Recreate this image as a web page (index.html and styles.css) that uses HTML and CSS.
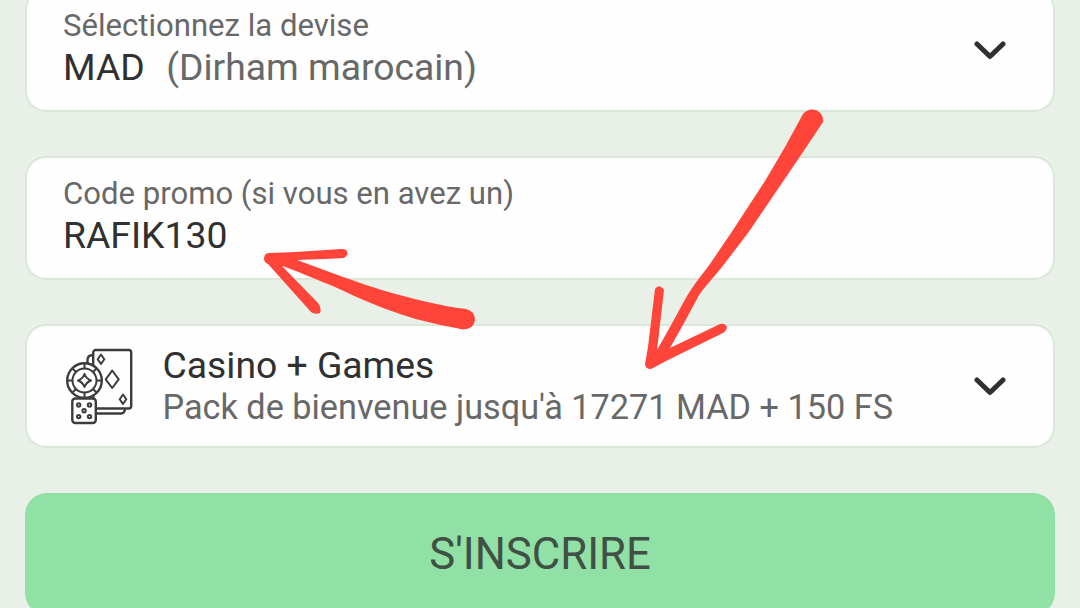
FILE: index.html
```
<!DOCTYPE html>
<html lang="fr">
<head>
  <meta charset="UTF-8">
  <meta name="viewport" content="width=device-width, initial-scale=1.0">
  <title>Inscription</title>
  <link rel="stylesheet" href="styles.css">
</head>
<body>
  <main class="signup">
    <div class="field">
      <div class="field-text">
        <span class="label">Sélectionnez la devise</span>
        <span class="value"><span class="code">MAD</span><span class="muted">(Dirham marocain)</span></span>
      </div>
      <svg class="chevron" viewBox="0 0 32 20"><path d="M3 4 L16 16.500 L29 4"/></svg>
    </div>

    <div class="field">
      <div class="field-text">
        <span class="label">Code promo (si vous en avez un)</span>
        <span class="value">RAFIK130</span>
      </div>
    </div>

    <div class="field field-bonus">
      <svg class="bonus-icon" viewBox="0 0 70 78">
        <!-- cards -->
        <path d="M22.500 18 V12 Q22.500 7 28 7 M30 65.500 H56 Q60 65.500 60 60"/>
        <rect x="28.200" y="2" width="38" height="58.500" rx="2.500"/>
        <path class="thin" d="M36 6.500 L39.300 11.200 L36 16 L32.700 11.200 Z M47.200 22.500 L53.700 31.300 L47.200 40 L40.700 31.300 Z M58 46.500 L61.300 51.200 L58 56 L54.700 51.200 Z"/>
        <!-- chip -->
        <circle cx="19.500" cy="32.500" r="17.300"/>
        <circle class="thin" cx="19.500" cy="32.500" r="12"/>
        <path class="thin" d="M19.500 15 V20.500 M19.500 44.500 V50 M2 32.500 H7.500 M31.500 32.500 H37 M7.300 20.300 L11 24 M28 41 L31.700 44.700 M31.700 20.300 L28 24 M7.300 44.700 L11 41"/>
        <path class="thin" d="M19.500 26 Q21.500 31 26 32.500 Q21.500 34 19.500 39 Q17.500 34 13 32.500 Q17.500 31 19.500 26 Z"/>
        <!-- dice -->
        <rect x="7.300" y="50.500" width="23.500" height="24.500" rx="3"/>
        <g class="thin">
          <circle cx="13.700" cy="57" r="1.700"/>
          <circle cx="24.500" cy="57" r="1.700"/>
          <circle cx="19.100" cy="62.700" r="1.700"/>
          <circle cx="13.700" cy="68.600" r="1.700"/>
          <circle cx="24.500" cy="68.600" r="1.700"/>
        </g>
      </svg>
      <div class="field-text">
        <span class="value">Casino + Games</span>
        <span class="offer">Pack de bienvenue jusqu'à 17271 MAD + 150 FS</span>
      </div>
      <svg class="chevron" viewBox="0 0 32 20"><path d="M3 4 L16 16.500 L29 4"/></svg>
    </div>

    <button class="submit" type="button">S'INSCRIRE</button>
  </main>

  <svg class="arrows" viewBox="0 0 1080 608">
    <path d="M265 255 C263 259 264 262 268 264 L311 312 Q315 315 320 313 Q322 308 318 303 L282 266 C297 271 320 281 335 287 C360 299 382 308 400 314 C420 321 445 326 463 329.500 Q474 329 475 320 Q475 311 466 309 C440 306 410 298 385 291 C358 283 330 272 297 260 L325 259 L344 258 Q348 256 347.500 252 Q346 248.500 341 249 L326 250 L295 252 L270 253 Q266 253 265 255 Z"/>
    <path d="M803 114 Q808 108 816 110 Q824 114 823 122 L803 152 L782 183 L748 233 L722 267 C708 284 700 292 697 299 L684 323 L670 348 L720 324 Q726 323 727 328 Q726 331 723 333 L668 360 L651 369 Q645 369 645 364 L648 347 L655 289 Q659 283 664 290 L657 350 L670 327 L682 305 C692 286 699 279 710 264 L733 230 L765 181 L785 147 Z"/>
  </svg>
</body>
</html>
```
FILE: styles.css
```
* {
  box-sizing: border-box;
}

body {
  margin: 0;
  height: 608px;
  overflow: hidden;
  background-color: #e8f0e8;
  font-family: Roboto, sans-serif;
  color: #303030;
}

.signup {
  display: flex;
  flex-direction: column;
  gap: 44px;
  margin-top: -12px;
  padding: 0 25px;
}

.field {
  display: flex;
  align-items: center;
  height: 124px;
  padding: 0 47px 0 36px;
  background-color: #fefefe;
  border: 2px solid #dae7da;
  border-radius: 21px;
}

.field-text {
  display: flex;
  flex-direction: column;
  flex: 1;
  padding-bottom: 6px;
  white-space: nowrap;
}

.label {
  font-size: 31.1px;
  line-height: 40px;
  color: #686868;
}

.value {
  font-size: 37.3px;
  line-height: 42px;
}

.code {
  margin-right: 21.5px;
}

.muted {
  color: #686868;
}

.offer {
  font-size: 34.25px;
  line-height: 42px;
  color: #686868;
}

.field-bonus .field-text {
  padding-bottom: 0;
}

.chevron {
  width: 32px;
  height: 20px;
  fill: none;
  stroke: #303030;
  stroke-width: 5;
  stroke-linecap: round;
  stroke-linejoin: round;
}

.bonus-icon {
  width: 70px;
  height: 78px;
  margin: 2px 27.5px 0 2px;
  fill: #fefefe;
  stroke: #3c3c3c;
  stroke-width: 2.4;
  stroke-linejoin: round;
}

.bonus-icon .thin {
  stroke-width: 2;
}

.submit {
  height: 122px;
  margin-top: 1px;
  padding-bottom: 2px;
  border: 0;
  border-radius: 22px;
  background-color: #91e0a5;
  color: #405044;
  font-family: inherit;
  font-size: 43.7px;
}

/* hand-drawn pointers over the form */
.arrows {
  position: absolute;
  top: 0;
  left: 0;
  width: 1080px;
  height: 608px;
  fill: #ff453a;
  pointer-events: none;
}
```
